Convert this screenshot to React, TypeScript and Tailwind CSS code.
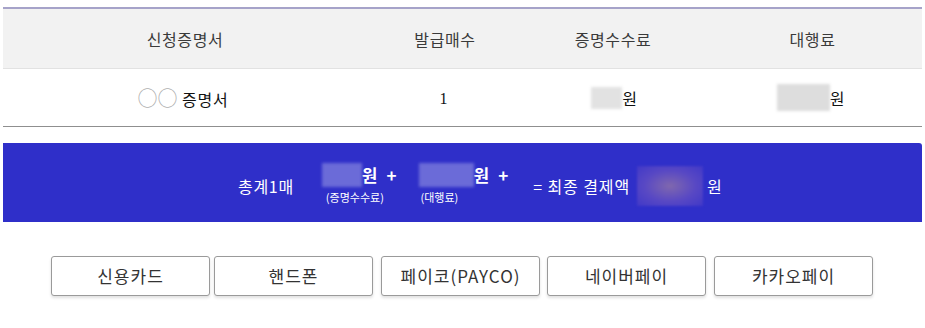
const font = "font-['Noto_Sans_CJK_KR','Noto_Sans',sans-serif]";

function Blur({ className }: { className: string }) {
  return <span className={`inline-block blur-[1.5px] ${className}`} />;
}

export default function App() {
  return (
    <div className={`w-[925px] h-[328px] bg-white ${font} text-[#333]`}>
      {/* Table */}
      <div className="pt-[7px] px-[3px]">
        <div className="border-t-2 border-[#a6a3c9] border-b border-b-[#8f8f8f]">
          <div className="flex h-[60px] items-center bg-[#f2f2f2] border-b border-[#e2e2e2] text-[16px] tracking-[0.6px] text-[#3a3a3a]">
            <div className="w-[364px] text-center">신청증명서</div>
            <div className="w-[156px] text-center">발급매수</div>
            <div className="w-[180px] text-center">증명수수료</div>
            <div className="w-[219px] text-center">대행료</div>
          </div>
          <div className="flex h-[57px] items-center text-[16px] text-[#111]">
            <div className="w-[364px] text-center tracking-[0.8px] pr-[4px]">
              <span className="text-[#b0b0b0] text-[20px] tracking-[0px]">○○</span>{" "}
              증명서
            </div>
            <div className="w-[156px] text-center font-['Liberation_Serif',serif] text-[16px] pt-[2px] pr-[3px]">1</div>
            <div className="w-[180px] flex justify-center items-center pl-[2px]">
              <Blur className="w-[31px] h-[22px] bg-[#e2e2e2]" />
              <span>원</span>
            </div>
            <div className="w-[219px] flex justify-center items-center pr-[4px]">
              <Blur className="w-[53px] h-[27px] bg-[#dddddd]" />
              <span>원</span>
            </div>
          </div>
        </div>
      </div>

      {/* Summary bar */}
      <div className="mx-[3px] mt-[16px] h-[79px] bg-[#2f2fc9] rounded-tr-[3px] flex items-center pl-[235px] text-white">
        <span className="text-[16px] tracking-[0.7px] mt-[7px]">총계1매</span>
        <div className="ml-[28px] flex flex-col items-start mt-[2px]">
          <div className="flex items-center">
            <Blur className="w-[40px] h-[24px] bg-[#6b6bd8]" />
            <span className="text-[17px] font-bold">원</span>
            <span className="text-[17px] font-bold ml-[9px]">+</span>
          </div>
          <span className="text-[11px] ml-[4px] mt-[1px]">(증명수수료)</span>
        </div>
        <div className="ml-[22px] flex flex-col items-start mt-[2px]">
          <div className="flex items-center">
            <Blur className="w-[55px] h-[24px] bg-[#6b6bd8]" />
            <span className="text-[17px] font-bold">원</span>
            <span className="text-[17px] font-bold ml-[9px]">+</span>
          </div>
          <span className="text-[11px] ml-[2px] mt-[1px]">(대행료)</span>
        </div>
        <span className="ml-[25px] text-[16px] tracking-[0.9px] mt-[7px]">= 최종 결제액</span>
        <span className="ml-[7px] mt-[7px] inline-block w-[66px] h-[40px] blur-[1px] bg-[radial-gradient(ellipse_at_center,#8068ae_0%,#5848c4_55%,#4038c8_100%)]" />
        <span className="ml-[4px] text-[16px] mt-[7px]">원</span>
      </div>

      {/* Payment buttons */}
      <div className="flex pl-[51px] mt-[34px] text-[17px] tracking-[1px] text-[#333]">
        {[
          ["신용카드", ""],
          ["핸드폰", "ml-[4px]"],
          ["페이코(PAYCO)", "ml-[8px]"],
          ["네이버페이", "ml-[7px]"],
          ["카카오페이", "ml-[8px]"],
        ].map(([label, m]) => (
          <button
            key={label}
            className={`${m} w-[159px] h-[40px] border border-[#9a9a9a] rounded-[3px] bg-white shadow-[0_2px_3px_rgba(0,0,0,0.12)] flex items-center justify-center`}
          >
            {label}
          </button>
        ))}
      </div>
    </div>
  );
}
